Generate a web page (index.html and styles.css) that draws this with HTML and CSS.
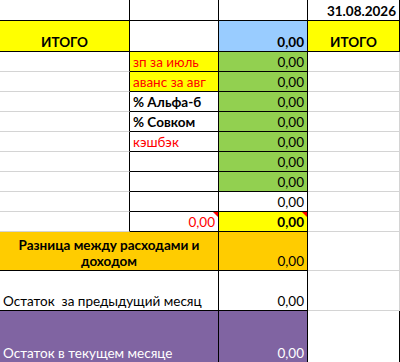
FILE: index.html
```html
<!DOCTYPE html>
<html>
  <head>
    <link rel="stylesheet" href="styles.css">
  </head>
  <body>
    <div class="sheet">
      <!-- шапка -->
      <div class="cell dark"></div>
      <div class="cell dark"></div>
      <div class="cell dark"></div>
      <div class="cell dark bold right">31.08.2026</div>

      <div class="cell dark yellow bold center">ИТОГО</div>
      <div class="cell dark"></div>
      <div class="cell dark blue bold right">0,00</div>
      <div class="cell dark yellow bold center">ИТОГО</div>

      <!-- статьи -->
      <div class="cell"></div>
      <div class="cell dark yellow red">зп за июль</div>
      <div class="cell dark green right">0,00</div>
      <div class="cell"></div>

      <div class="cell"></div>
      <div class="cell dark yellow red">аванс за авг</div>
      <div class="cell dark green right">0,00</div>
      <div class="cell"></div>

      <div class="cell"></div>
      <div class="cell dark bold">% Альфа-б</div>
      <div class="cell dark green right">0,00</div>
      <div class="cell"></div>

      <div class="cell"></div>
      <div class="cell dark bold">% Совком</div>
      <div class="cell dark green right">0,00</div>
      <div class="cell"></div>

      <div class="cell"></div>
      <div class="cell dark red">кэшбэк</div>
      <div class="cell dark green right">0,00</div>
      <div class="cell"></div>

      <div class="cell"></div>
      <div class="cell dark"></div>
      <div class="cell dark green right">0,00</div>
      <div class="cell"></div>

      <div class="cell"></div>
      <div class="cell dark"></div>
      <div class="cell dark green right">0,00</div>
      <div class="cell"></div>

      <div class="cell"></div>
      <div class="cell dark"></div>
      <div class="cell dark right">0,00</div>
      <div class="cell"></div>

      <div class="cell"></div>
      <div class="cell dark red right note">0,00</div>
      <div class="cell dark yellow bold right note">0,00</div>
      <div class="cell"></div>

      <!-- итоги -->
      <div class="cell dark wide orange bold center">Разница между расходами и доходом</div>
      <div class="cell dark orange right">0,00</div>
      <div class="cell"></div>

      <div class="cell dark wide">Остаток&nbsp; за предыдущий месяц</div>
      <div class="cell dark right">0,00</div>
      <div class="cell"></div>

      <div class="cell dark wide purple">Остаток в текущем месяце</div>
      <div class="cell dark purple right">0,00</div>
      <div class="cell"></div>
    </div>
  </body>
</html>
```

FILE: styles.css
```css
body {
  margin: 0;
  background: white;
  font-family: Lato, "Liberation Sans", sans-serif;
  font-size: 13.5px;
  color: black;
}

.sheet {
  display: grid;
  grid-template-columns: 130px 89px 89px 92px;
  grid-template-rows: 21px 31px repeat(9, 20px) 39px 40px 52px;
  width: 400px;
  height: 362px;
  overflow: hidden;
}

.cell {
  position: relative;
  box-sizing: border-box;
  display: flex;
  align-items: flex-end;
  padding: 0 3px 1px 3px;
  line-height: 16px;
  white-space: nowrap;
  border-right: 1px solid #d4d4d4;
  border-bottom: 1px solid #d4d4d4;
}

.cell:nth-child(4n + 1) {
  border-right-color: black;
}

.dark {
  border-color: black;
}

.wide {
  grid-column: span 2;
  white-space: normal;
}

.bold {
  font-weight: bold;
}

.right {
  justify-content: flex-end;
}

.center {
  justify-content: center;
  text-align: center;
}

.red {
  color: #ff0000;
}

.yellow {
  background-color: #ffff00;
}

.blue {
  background-color: #99ccff;
}

.green {
  background-color: #92d050;
}

.orange {
  background-color: #ffcc00;
}

.purple {
  background-color: #8064a2;
  color: white;
}

/* красный уголок примечания */
.note::after {
  content: "";
  position: absolute;
  top: 0;
  right: 0;
  border-top: 5px solid #ff0000;
  border-left: 5px solid transparent;
}
```
